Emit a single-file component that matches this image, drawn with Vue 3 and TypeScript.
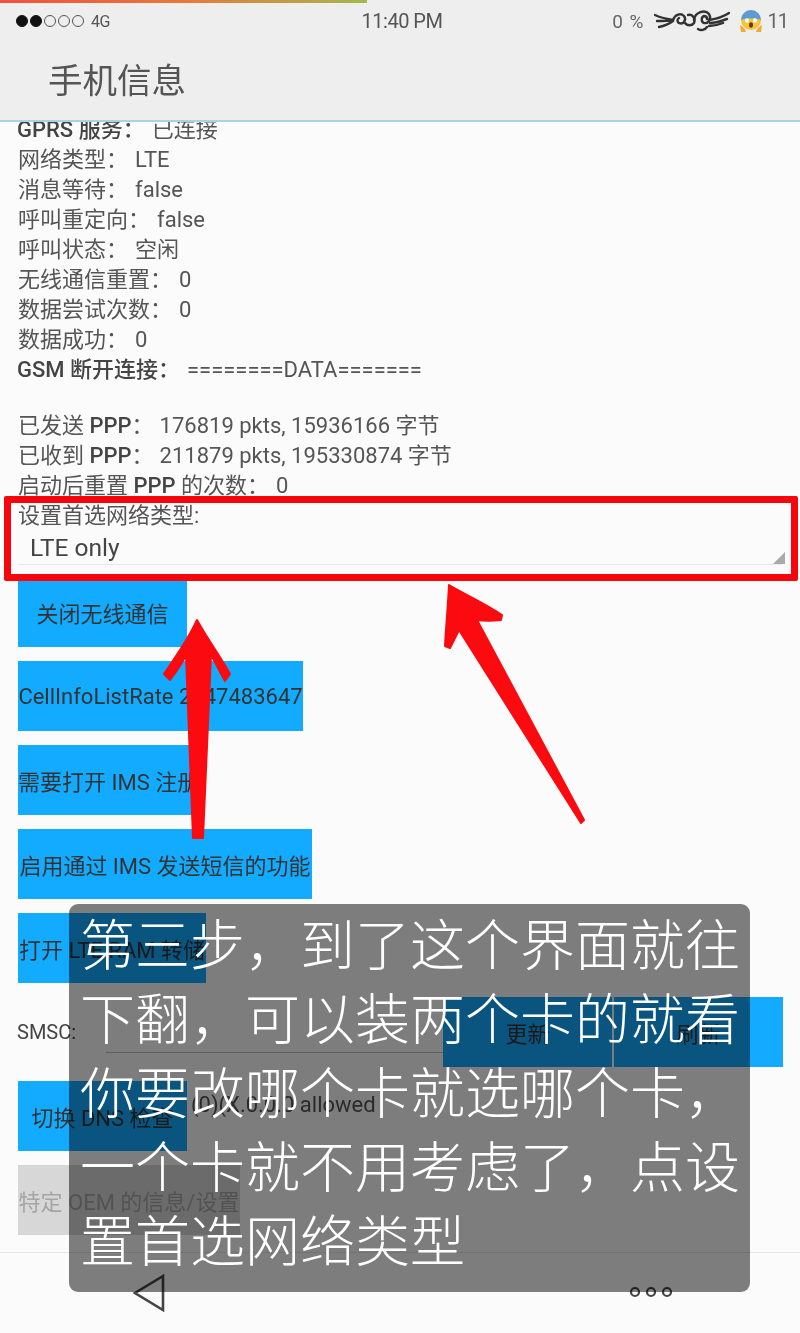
<script setup lang="ts">
const infoA: [string, string, boolean?][] = [
  ['GPRS 服务：', '已连接', true],
  ['网络类型：', 'LTE'],
  ['消息等待：', 'false'],
  ['呼叫重定向：', 'false'],
  ['呼叫状态：', '空闲'],
  ['无线通信重置：', '0'],
  ['数据尝试次数：', '0'],
  ['数据成功：', '0'],
  ['GSM 断开连接：', '========DATA=======', true],
]
const dots = [0, 1, 2, 3, 4]
</script>

<template>
  <div class="page">
    <header class="head">
      <div class="progress"></div>
      <div class="status">
        <div class="signal">
          <i v-for="d in dots" :key="d" :class="['dot', { on: d < 2 }]"></i>
          <span class="net">4G</span>
        </div>
        <span class="clock">11:40 PM</span>
        <div class="right">
          <span class="pct">0 %</span>
          <svg class="wings" viewBox="0 0 76 26" fill="none" stroke="#333" stroke-width="2.400" stroke-linecap="round">
            <path d="M1 7c6 3 12 4 18 5M3 13c6 0 11 0 16-1M5 19c5-1 10-3 14-6" />
            <path d="M19 12c2-6 8-7 11-4 3 4-1 9-5 7-2-1-2-4 0-5M31 15c2 3 7 3 9 0 2-5-2-9-6-8" />
            <path d="M40 12c1-8 11-11 15-6 3 5-1 10-5 9-3-1-3-6 0-7 2 0 3 1 3 3M44 21c3 2 7 1 9-2" />
            <path d="M55 12c7-1 14-3 20-7M56 15c6 0 11-2 17-4M55 18c5 0 9-1 14-3" />
          </svg>
          <svg class="emoji" viewBox="0 0 26 22">
            <circle cx="13" cy="10" r="10" fill="#f5c43c" />
            <path d="M3 10a10 10 0 0 1 20 0c-3-2-17-2-20 0z" fill="#5c9bd6" />
            <ellipse cx="9" cy="10.500" rx="2" ry="2.200" fill="#fff" />
            <ellipse cx="17" cy="10.500" rx="2" ry="2.200" fill="#fff" />
            <ellipse cx="13" cy="15" rx="2" ry="2.800" fill="#6b3a1e" />
            <path d="M2 15c2 1 5 3 6 7H3zM24 15c-2 1-5 3-6 7h5z" fill="#f2a92c" />
          </svg>
          <span class="count">11</span>
        </div>
      </div>
      <h1 class="title">手机信息</h1>
    </header>

    <main class="content">
      <p v-for="row in infoA" :key="row[0]" class="row">
        <span :class="{ strong: row[2] }">{{ row[0] }}</span><span class="val">{{ row[1] }}</span>
      </p>

      <div class="group">
        <p class="row">已发送 <b>PPP</b>：<span class="val wide">176819 pkts, 15936166 字节</span></p>
        <p class="row">已收到 <b>PPP</b>：<span class="val wide">211879 pkts, 195330874 字节</span></p>
        <p class="row">启动后重置 <b>PPP</b> 的次数：<span class="val">0</span></p>
        <p class="row">设置首选网络类型:</p>
      </div>

      <div class="spinner">
        <span>LTE only</span>
        <i class="corner"></i>
      </div>

      <div class="buttons">
        <button class="btn b1">关闭无线通信</button>
        <button class="btn b2">CellInfoListRate 2147483647</button>
        <button class="btn b3">需要打开 IMS 注册</button>
        <button class="btn b4">启用通过 IMS 发送短信的功能</button>
        <button class="btn b5">打开 LTE RAM 转储</button>
        <div class="smsc">
          <span class="smsc-label">SMSC:</span>
          <span class="smsc-input"></span>
          <button class="btn pair">更新</button>
          <button class="btn pair">刷新</button>
        </div>
        <div class="dns">
          <button class="btn b1">切换 DNS 检查</button>
          <span class="dns-text">(0)(X.0.0.0 allowed</span>
        </div>
        <button class="btn off">特定 OEM 的信息/设置</button>
      </div>
    </main>

    <nav class="nav">
      <svg class="back" viewBox="0 0 34 38" fill="none" stroke="#444" stroke-width="2.600">
        <path d="M31 2 3 19l28 17z" stroke-linejoin="miter" />
      </svg>
      <svg class="more" viewBox="0 0 44 12" fill="none" stroke="#444" stroke-width="2.200">
        <circle cx="6" cy="6" r="4" />
        <circle cx="22" cy="6" r="4" />
        <circle cx="38" cy="6" r="4" />
      </svg>
    </nav>

    <div class="redbox"></div>

    <svg class="arrows" viewBox="0 0 800 1333">
      <path d="M197 620 C208 640 220 656 230 674 L225 681 C220 672 216 664 211 655 L203 838 193 838 186 655 C182 664 176 672 170 680 L164 674 C176 656 188 640 197 620Z" fill="#fb0a10" stroke="#fb0a10" stroke-width="2" stroke-linejoin="round" />
      <path d="M449 585 C468 596 486 604 502 615 L501 620 C492 621 485 621 477 620 L584 820 581 823 459 630 C456 636 453 642 450 648 L445 646 C446 626 448 606 449 585Z" fill="#fb0a10" stroke="#fb0a10" stroke-width="2" stroke-linejoin="round" />
    </svg>

    <div class="caption">第三步，到了这个界面就往下翻，可以装两个卡的就看你要改哪个卡就选哪个卡，一个卡就不用考虑了，点设置首选网络类型</div>
  </div>
</template>

<style scoped>
.page {
  position: relative;
  width: 800px;
  height: 1333px;
  overflow: hidden;
  background: #fbfbfb;
  font-family: Roboto, "Noto Sans CJK SC", sans-serif;
  color: #555;
  filter: blur(0.6px);
}
.head {
  position: relative;
  z-index: 1;
  height: 122px;
  box-sizing: border-box;
  background: #eeeeee;
  border-bottom: 2px solid #a9d3e0;
}
.progress {
  width: 367px;
  height: 3px;
  background: linear-gradient(90deg, #f2503c, #e8783c 50%, #a3b84c);
}
.status {
  display: grid;
  grid-template-columns: 1fr auto 1fr;
  align-items: center;
  height: 36px;
  padding: 0 12px 0 16px;
}
.signal {
  display: flex;
  align-items: center;
  gap: 2px;
}
.dot {
  width: 12px;
  height: 12px;
  box-sizing: border-box;
  border: 1.5px solid #555;
  border-radius: 50%;
}
.dot.on {
  background: #111;
  border-color: #111;
}
.net {
  margin-left: 5px;
  font-size: 16px;
  letter-spacing: -0.5px;
  color: #555;
}
.clock {
  font-size: 20px;
  color: #555;
  letter-spacing: -0.5px;
}
.right {
  display: flex;
  align-items: center;
  justify-content: flex-end;
}
.pct {
  font-size: 19px;
  letter-spacing: 1px;
  color: #666;
}
.wings {
  width: 76px;
  height: 26px;
  margin-left: 9px;
}
.emoji {
  width: 26px;
  height: 22px;
  margin-left: 8px;
}
.count {
  margin-left: 4px;
  font-size: 20px;
  letter-spacing: -1px;
  color: #666;
}
.title {
  margin: 0;
  padding: 19px 0 0 48px;
  font-size: 34.500px;
  font-weight: 400;
  line-height: 46px;
  color: #555;
}
.content {
  margin-top: -7px;
  padding-left: 18px;
}
.row {
  margin: 0;
  height: 30px;
  font-size: 22px;
  line-height: 30px;
  white-space: nowrap;
}
.row b,
.strong {
  font-weight: 500;
  color: #444;
}
.strong {
  margin-left: -1px;
}
.val {
  margin-left: 7px;
}
.val.wide {
  margin-left: 6px;
}
.group {
  margin-top: 26px;
}
.spinner {
  position: relative;
  height: 34px;
  margin-right: 18px;
  padding-left: 12px;
  box-sizing: border-box;
  border-bottom: 1px solid #e8e8e8;
  font-size: 24.500px;
  line-height: 34px;
  color: #444;
}
.corner {
  position: absolute;
  right: -3px;
  bottom: 0;
  width: 0;
  height: 0;
  border-style: solid;
  border-width: 0 0 12px 12px;
  border-color: transparent transparent #aaa transparent;
}
.buttons {
  display: flex;
  flex-direction: column;
  align-items: flex-start;
  gap: 14px;
  margin-top: 12px;
}
.btn {
  height: 70px;
  padding: 0;
  border: 0;
  background: #12abff;
  color: #333;
  font-family: inherit;
  font-size: 22px;
  white-space: nowrap;
  overflow: hidden;
  flex: none;
}
.b1 { width: 169px; }
.b2 { width: 285px; }
.b3 { width: 180px; }
.b4 { width: 294px; }
.b5 { width: 188px; }
.off {
  width: 222px;
  background: #d7d7d7;
  color: #a5a5a5;
}
.smsc {
  display: flex;
  align-items: center;
  height: 70px;
  width: 765px;
}
.smsc-label {
  width: 89px;
  margin-left: -1px;
  font-size: 20px;
  color: #444;
}
.smsc-input {
  align-self: flex-end;
  width: 337px;
  height: 15px;
  border-bottom: 1px solid #bbb;
  margin-bottom: 14px;
}
.pair {
  width: 169px;
}
.pair + .pair {
  margin-left: 2px;
}
.dns {
  display: flex;
  align-items: flex-start;
  width: 100%;
}
.dns-text {
  margin: 10px 0 0 4px;
  font-size: 22px;
  line-height: 28px;
  color: #555;
}
.nav {
  position: absolute;
  left: 0;
  right: 0;
  bottom: 0;
  height: 80px;
  border-top: 1px solid #e6e6e6;
}
.back {
  position: absolute;
  left: 132px;
  top: 21px;
  width: 34px;
  height: 38px;
}
.more {
  position: absolute;
  left: 629px;
  top: 33px;
  width: 44px;
  height: 12px;
}
.redbox {
  position: absolute;
  left: 4px;
  top: 496px;
  width: 794px;
  height: 85px;
  box-sizing: border-box;
  border: 7px solid #f6060c;
  border-radius: 2px;
}
.arrows {
  position: absolute;
  left: 0;
  top: 0;
  width: 800px;
  height: 1333px;
}
.caption {
  position: absolute;
  left: 69px;
  top: 904px;
  width: 681px;
  height: 388px;
  box-sizing: border-box;
  padding: 0 0 0 11px;
  border-radius: 9px;
  background: rgba(0, 0, 0, 0.5);
  color: #fff;
  font-size: 55px;
  line-height: 74px;
  font-family: "Noto Sans CJK SC", sans-serif;
  font-weight: 300;
}
</style>
